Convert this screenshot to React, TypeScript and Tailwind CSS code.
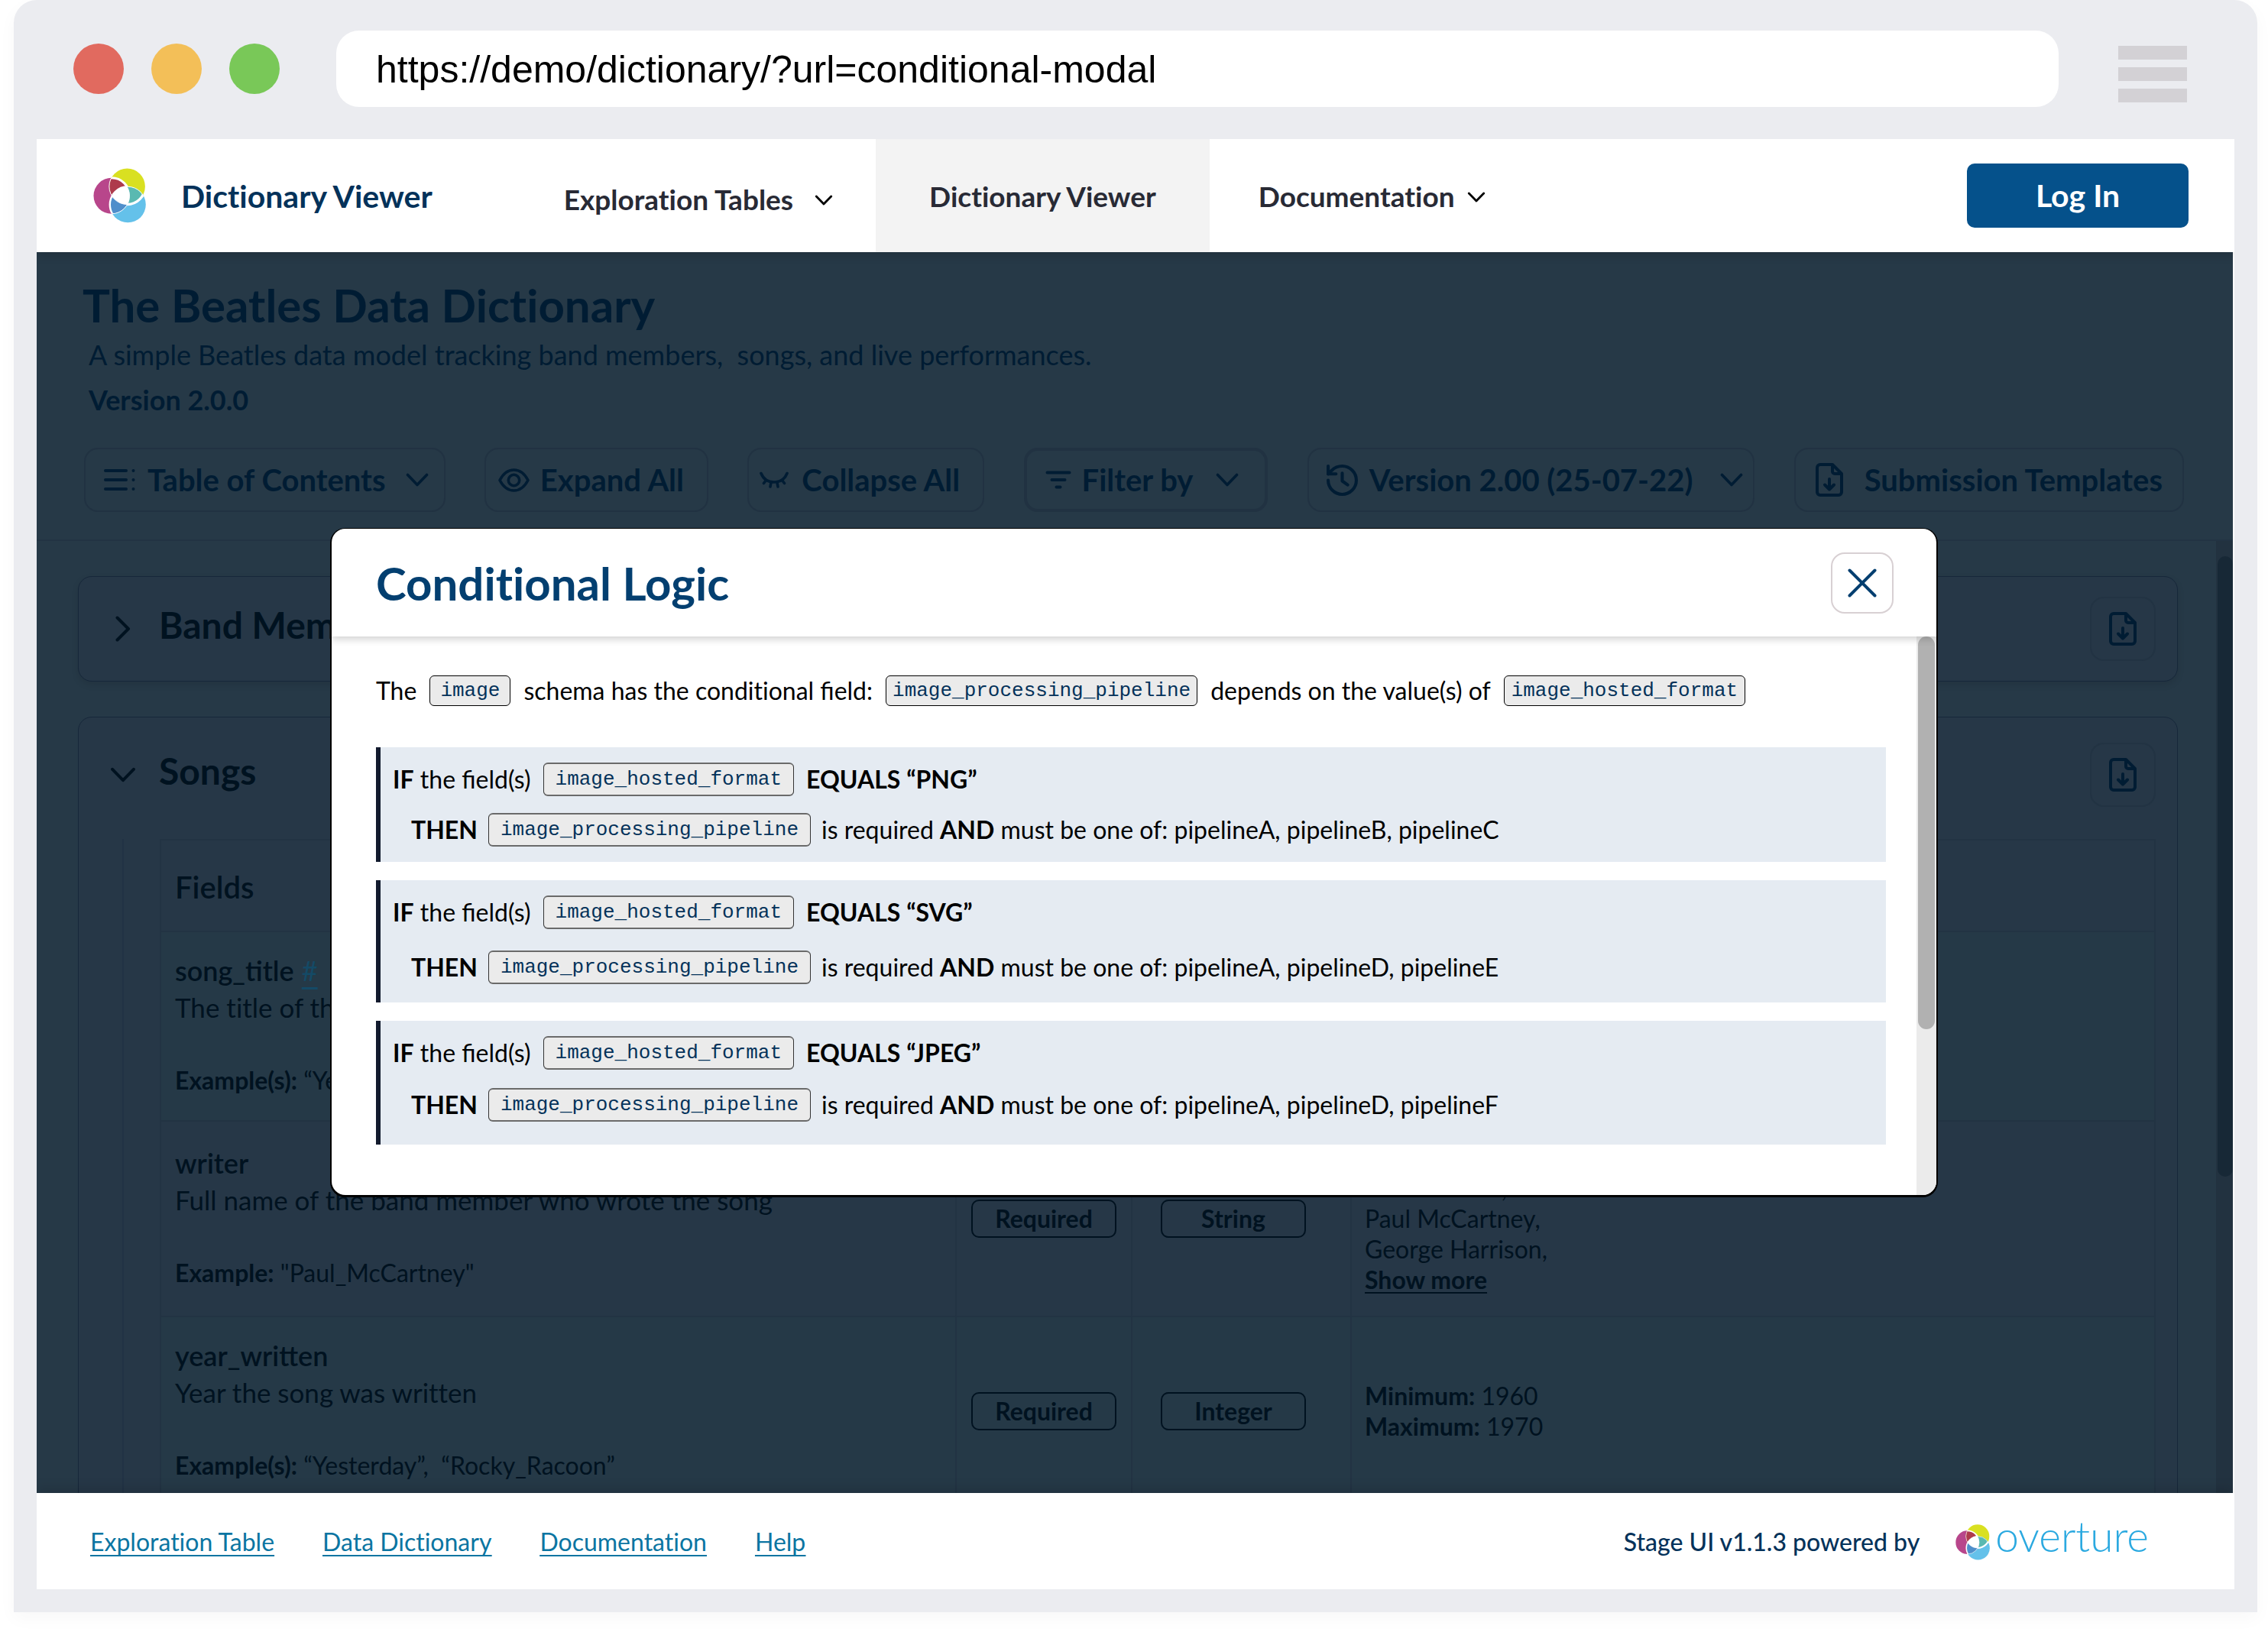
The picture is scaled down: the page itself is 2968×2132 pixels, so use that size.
import { useId, type ReactNode } from "react";

function OvertureMark({ className }: { className: string }) {
  const id = useId().replace(/[^a-zA-Z0-9]/g, "");
  const y = `y${id}`;
  const m = `m${id}`;
  const b = `b${id}`;
  const yellow = { cx: 56.4, cy: 38, r: 23.5 };
  const magenta = { cx: 36, cy: 50.3, r: 23.5 };
  const blue = { cx: 57.3, cy: 61.8, r: 23.5 };
  return (
    <svg viewBox="12 14 69 72" className={className} aria-hidden="true">
      <defs>
        <clipPath id={y}><circle {...yellow} /></clipPath>
        <clipPath id={m}><circle {...magenta} /></clipPath>
        <clipPath id={b}><circle {...blue} /></clipPath>
      </defs>
      <circle {...magenta} fill="#b8468b" />
      <circle {...yellow} fill="#d9e021" />
      <circle {...blue} fill="#64c1ea" />
      <g clipPath={`url(#${y})`}>
        <circle {...magenta} fill="#ae3b4c" stroke="#fff" strokeWidth="3" />
        <circle {...blue} fill="#5ab9b1" />
      </g>
      <g clipPath={`url(#${b})`}>
        <circle {...yellow} fill="none" stroke="#fff" strokeWidth="3.4" />
        <g clipPath={`url(#${m})`}>
          <rect x="0" y="0" width="100" height="100" fill="#4f8fcb" />
        </g>
        <circle {...magenta} fill="none" stroke="#fff" strokeWidth="1" />
      </g>
      <g clipPath={`url(#${m})`}>
        <circle {...yellow} fill="none" stroke="#fff" strokeWidth="1" />
        <circle {...blue} fill="none" stroke="#fff" strokeWidth="2.4" />
        <g clipPath={`url(#${y})`}>
          <circle {...blue} fill="#fff" />
        </g>
      </g>
      <g clipPath={`url(#${y})`}>
        <circle {...blue} fill="none" stroke="#fff" strokeWidth="1" />
      </g>
    </svg>
  );
}

function ChevronDown({ className }: { className: string }) {
  return (
    <svg viewBox="0 0 30 18" className={className} fill="none" stroke="currentColor" strokeWidth="3.6" strokeLinecap="round" strokeLinejoin="round" aria-hidden="true">
      <path d="M2.5 2.5 15 15.5 27.5 2.5" />
    </svg>
  );
}

function FileDownIcon() {
  return (
    <svg viewBox="0 0 36 44" className="h-11 w-9 shrink-0" fill="none" stroke="currentColor" strokeWidth="4" strokeLinecap="round" strokeLinejoin="round" aria-hidden="true">
      <path d="M6 2h16l12 12v24a4 4 0 0 1-4 4H6a4 4 0 0 1-4-4V6a4 4 0 0 1 4-4z" />
      <path d="M22 3v8a3 3 0 0 0 3 3h8" />
      <path d="M18 21v13M12 28.500l6 6 6-6" />
    </svg>
  );
}

function ListIcon() {
  return (
    <svg viewBox="0 0 41 30" className="h-[30px] w-[41px]" fill="none" stroke="currentColor" strokeWidth="4" strokeLinecap="round" aria-hidden="true">
      <path d="M2 3h27M2 15h27M2 27h27" />
      <path d="M38.500 3h.01M38.500 15h.01M38.500 27h.01" />
    </svg>
  );
}

function EyeIcon() {
  return (
    <svg viewBox="0 0 41 31" className="h-[31px] w-[41px]" fill="none" stroke="currentColor" strokeWidth="3.600" strokeLinejoin="round" aria-hidden="true">
      <path d="M2 15.500C7 6 13 2 20.500 2S34 6 39 15.500C34 25 28 29 20.500 29S7 25 2 15.500z" />
      <circle cx="20.500" cy="15.500" r="7.200" />
    </svg>
  );
}

function EyeClosedIcon() {
  return (
    <svg viewBox="0 0 38 22" className="h-[22px] w-[38px]" fill="none" stroke="currentColor" strokeWidth="3.600" strokeLinecap="round" aria-hidden="true">
      <path d="M2 2.500C5 10 11 14 19 14s14-4 17-11.500" />
      <path d="M15 14.500 14 20M23 14.500 24 20M8.500 11.500 5.500 15.500M29.500 11.500l3 4" />
    </svg>
  );
}

function FilterIcon() {
  return (
    <svg viewBox="0 0 34 24" className="h-6 w-[34px]" fill="none" stroke="currentColor" strokeWidth="4" strokeLinecap="round" aria-hidden="true">
      <path d="M2.500 2.500h29M8.500 12h17M14.500 21.500h5" />
    </svg>
  );
}

function HistoryIcon() {
  return (
    <svg viewBox="2 2 20 20" className="size-[41px]" fill="none" stroke="currentColor" strokeWidth="2" strokeLinecap="round" strokeLinejoin="round" aria-hidden="true">
      <path d="M3 12a9 9 0 1 0 9-9 9.750 9.750 0 0 0-6.740 2.740L3 8" />
      <path d="M3 3v5h5" />
      <path d="M12 7.500v5l3.500 2.500" />
    </svg>
  );
}

function ToolbarButton({ className, children }: { className: string; children: ReactNode }) {
  return (
    <button type="button" className={`flex h-[84px] items-center whitespace-nowrap rounded-[18px] border-[#213242] text-[40px] font-bold leading-none text-[#001c33] ${className}`}>
      {children}
    </button>
  );
}

function DownloadButton({ label }: { label: string }) {
  return (
    <button type="button" aria-label={label} className="flex h-[84px] w-[86px] items-center justify-center rounded-[18px] border-2 border-[#223343] text-[#001c33]">
      <FileDownIcon />
    </button>
  );
}

function Badge({ children }: { children: ReactNode }) {
  return (
    <span className="inline-flex h-[50px] w-[190px] items-center justify-center rounded-[10px] border-2 border-[#001220] text-[32px] font-bold leading-none">
      {children}
    </span>
  );
}

function IntroChip({ className, children }: { className: string; children: ReactNode }) {
  return (
    <code className={`flex h-10 items-center rounded-[6px] border border-black bg-[#ebebeb] font-['Liberation_Mono',monospace] text-[26px] leading-none text-[#04325a] ${className}`}>
      {children}
    </code>
  );
}

function RuleChip({ children }: { children: ReactNode }) {
  return (
    <code className="flex h-11 items-center rounded-[6px] border-x border-y-2 border-x-[#333] border-y-[#6a6a6a] bg-[#ebebeb] px-[15px] font-['Liberation_Mono',monospace] text-[26px] leading-none text-[#04325a]">
      {children}
    </code>
  );
}

function Rule({ value, options, className }: { value: string; options: string; className: string }) {
  return (
    <section className={`flex flex-col border-l-[6px] border-[#131b2e] bg-[#e5ebf2] pl-4 pt-5 ${className}`}>
      <p className="flex h-11 items-center gap-4">
        <span>
          <b>IF</b> the <span className="[font-variant-ligatures:normal]">field(s)</span>
        </span>
        <RuleChip>image_hosted_format</RuleChip>
        <b>EQUALS “{value}”</b>
      </p>
      <p className="flex h-11 items-center gap-3.5 pl-6">
        <b>THEN</b>
        <RuleChip>image_processing_pipeline</RuleChip>
        <span>
          is required <b>AND</b> must be one of: {options}
        </span>
      </p>
    </section>
  );
}

function ConditionalModal() {
  return (
    <div className="absolute inset-0 flex items-start pl-[386px] pr-[388px] pt-[362px]">
      <div role="dialog" aria-labelledby="modal-title" className="flex-1 overflow-hidden rounded-[18px] bg-white text-black shadow-[0_1px_0_2px_#000]">
        <div className="relative flex items-center justify-between pb-[30px] pl-[58px] pr-14 pt-[31px] shadow-[0_3px_10px_rgba(0,0,0,0.2)]">
          <h2 id="modal-title" className="text-[60px] font-bold leading-none text-[#033f70]">Conditional Logic</h2>
          <button type="button" aria-label="Close" className="flex h-20 w-[82px] items-center justify-center rounded-[18px] border-2 border-[#d8d0d3] text-[#033f70]">
            <svg viewBox="0 0 38 38" className="size-[38px]" stroke="currentColor" strokeWidth="4" strokeLinecap="round" aria-hidden="true">
              <path d="M2.500 2.500l33 33M35.500 2.500l-33 33" />
            </svg>
          </button>
        </div>
        <div className="flex">
          <div className="flex-1 pb-[66px] pl-[58px] pr-10 pt-[51px] text-[32px] leading-10">
            <p className="mb-[54px] flex items-center gap-[17px]">
              <span>The</span>
              <IntroChip className="px-[13px]">image</IntroChip>
              <span>
                schema has the conditional <span className="[font-variant-ligatures:normal]">field</span>:
              </span>
              <IntroChip className="px-2">image_processing_pipeline</IntroChip>
              <span>depends on the value(s) of</span>
              <IntroChip className="px-[9px]">image_hosted_format</IntroChip>
            </p>
            <div className="flex flex-col gap-6">
              <Rule value="PNG" options="pipelineA, pipelineB, pipelineC" className="gap-[22px] pb-5" />
              <Rule value="SVG" options="pipelineA, pipelineD, pipelineE" className="gap-7 pb-6" />
              <Rule value="JPEG" options="pipelineA, pipelineD, pipelineF" className="gap-6 pb-[30px]" />
            </div>
          </div>
          <div className="w-[26px] bg-[#ebebeb] px-0.5">
            <div className="h-[514px] rounded-full bg-[#b1b1b1]" />
          </div>
        </div>
      </div>
    </div>
  );
}

function FieldCell({ name, anchor, description, exampleLabel, example, className }: { name: string; anchor?: boolean; description: string; exampleLabel: string; example: string; className: string }) {
  return (
    <td className={`border-2 border-[#223343] pl-[18px] text-left align-top leading-[48px] ${className}`}>
      <div className="text-[36px]">
        <span className="font-semibold [font-variant-ligatures:normal]">{name}</span>
        {anchor && <a href="#song_title" className="ml-2.5 text-[#144a66] underline underline-offset-8">#</a>}
      </div>
      <div className="text-[35px]">{description}</div>
      <div className="mt-12 text-[32px]">
        <b>{exampleLabel}</b> {example}
      </div>
    </td>
  );
}

function DictionaryTable() {
  return (
    <table className="w-full table-fixed border-collapse text-[#001220]">
      <colgroup>
        <col className="w-[1041px]" />
        <col className="w-[230px]" />
        <col className="w-[287px]" />
        <col />
      </colgroup>
      <thead>
        <tr className="h-[120px]">
          <th scope="col" colSpan={4} className="border-2 border-[#223343] pl-[18px] pt-1 text-left text-[40px] font-semibold leading-none">Fields</th>
        </tr>
      </thead>
      <tbody className="bg-[#253947]">
        <tr>
          <FieldCell name="song_title" anchor description="The title of the song" exampleLabel="Example(s):" example="“Yesterday”" className="pb-7 pt-[26px]" />
          <td className="border-2 border-[#223343]" />
          <td className="border-2 border-[#223343]" />
          <td className="border-2 border-[#223343]" />
        </tr>
        <tr className="bg-[#263747]">
          <FieldCell name="writer" description="Full name of the band member who wrote the song" exampleLabel="Example:" example={'"Paul_McCartney"'} className="pb-8 pt-[30px]" />
          <td className="border-2 border-[#223343] text-center"><Badge>Required</Badge></td>
          <td className="border-2 border-[#223343] pl-[37px]"><Badge>String</Badge></td>
          <td className="border-2 border-[#223343] pl-[17px] text-[32px] leading-10">
            <b>One of:</b>
            <br />
            John Lennon,
            <br />
            Paul McCartney,
            <br />
            George Harrison,
            <br />
            <a href="#writer" className="font-bold underline decoration-2 underline-offset-4">Show more</a>
          </td>
        </tr>
        <tr>
          <FieldCell name="year_written" description="Year the song was written" exampleLabel="Example(s):" example="“Yesterday”,  “Rocky_Racoon”" className="whitespace-pre-wrap pb-7 pt-[26px]" />
          <td className="border-2 border-[#223343] text-center"><Badge>Required</Badge></td>
          <td className="border-2 border-[#223343] pl-[37px]"><Badge>Integer</Badge></td>
          <td className="border-2 border-[#223343] pl-[17px] text-[32px] leading-10">
            <b>Minimum:</b> 1960
            <br />
            <b>Maximum:</b> 1970
          </td>
        </tr>
      </tbody>
    </table>
  );
}

function CardHeader({ open, title, className }: { open: boolean; title: string; className: string }) {
  return (
    <div className={`flex items-center pl-[41px] pr-7 ${className}`}>
      <button type="button" aria-expanded={open} className="flex items-center gap-[30px] text-[#001220]">
        <span className="flex w-[34px] justify-center">
          {open ? (
            <ChevronDown className="h-5 w-[34px]" />
          ) : (
            <svg viewBox="0 0 20 34" className="h-[34px] w-5" fill="none" stroke="currentColor" strokeWidth="4" strokeLinecap="round" strokeLinejoin="round" aria-hidden="true">
              <path d="M2.500 2.500 17 17 2.500 31.500" />
            </svg>
          )}
        </span>
        <span className="pb-2.5 text-[48px] font-bold leading-none">{title}</span>
      </button>
      <div className="ml-auto">
        <DownloadButton label={`Download ${title} template`} />
      </div>
    </div>
  );
}

export default function App() {
  return (
    <div className="flex h-screen flex-col overflow-hidden bg-white px-[18px] pb-[22px] font-['Lato',sans-serif] [font-variant-ligatures:none]">
      <div className="mr-[-4px] flex min-h-0 flex-1 flex-col rounded-t-[30px] bg-[#ebecf0] px-[30px] pb-[30px] shadow-[0_8px_24px_rgba(0,0,0,0.03)]">
        <div className="flex items-center pb-[42px] pl-12 pr-[62px] pt-10">
          <div className="flex gap-9">
            <span className="size-[66px] rounded-full bg-[#e16a5f]" />
            <span className="size-[66px] rounded-full bg-[#f3bf58]" />
            <span className="size-[66px] rounded-full bg-[#79c858]" />
          </div>
          <input
            aria-label="Address"
            readOnly
            value="https://demo/dictionary/?url=conditional-modal"
            className="ml-[74px] h-[100px] flex-1 rounded-[30px] bg-white pl-[52px] pt-0.5 font-['Liberation_Sans',sans-serif] text-[50px] text-black"
          />
          <button type="button" aria-label="Browser menu" className="ml-[78px] mt-3.5 flex flex-col gap-2.5">
            <span className="h-[18px] w-[90px] bg-[#d3d1d5]" />
            <span className="h-[18px] w-[90px] bg-[#d3d1d5]" />
            <span className="h-[18px] w-[90px] bg-[#d3d1d5]" />
          </button>
        </div>

        <div className="flex min-h-0 flex-1 flex-col overflow-hidden bg-white">
          <header className="relative z-10 flex items-stretch bg-white pl-[74px] pr-[60px] shadow-[0_4px_12px_rgba(0,0,0,0.15)]">
            <a href="#home" className="flex items-center gap-[46px] text-[41px] font-bold leading-none text-[#04325a]">
              <OvertureMark className="h-[72px] w-[69px]" />
              Dictionary Viewer
            </a>
            <nav className="ml-[172px] flex items-stretch text-[37px] font-bold leading-none text-[#282a35]">
              <button type="button" className="flex items-center gap-7 pr-14 pt-2">
                Exploration Tables
                <ChevronDown className="mt-1 h-3.5 w-6 text-black" />
              </button>
              <a href="#dictionary" aria-current="page" className="flex items-center bg-[#f3f3f3] px-[70px]">Dictionary Viewer</a>
              <button type="button" className="ml-16 flex items-center gap-4">
                Documentation
                <ChevronDown className="mt-1 h-3.5 w-6 text-black" />
              </button>
            </nav>
            <button type="button" className="my-8 ml-auto h-[84px] w-[290px] rounded-[10px] bg-[#05518b] pb-0.5 text-[41px] font-bold leading-none text-white">
              Log In
            </button>
          </header>

          <main className="relative mr-0.5 flex min-h-0 flex-1 flex-col overflow-hidden bg-[#263947] text-[#001c33]">
            <section className="border-b-2 border-[#223343] pb-9">
              <div className="pl-[60px] pt-[34px]">
                <h1 className="text-[60px] font-bold leading-[70px]">The Beatles Data Dictionary</h1>
                <p className="whitespace-pre-wrap pl-2 text-[36px] leading-[60px]">A simple Beatles data model tracking band members,  songs, and live performances.</p>
                <p className="pl-2 text-[36px] font-bold leading-[58px]">Version 2.0.0</p>
              </div>
              <div className="mt-[34px] flex justify-between pl-[62px] pr-16">
                <ToolbarButton className="border-2 pl-6 pr-5">
                  <ListIcon />
                  <span className="ml-4 mr-[26px]">Table of Contents</span>
                  <ChevronDown className="h-[18px] w-[30px]" />
                </ToolbarButton>
                <ToolbarButton className="gap-[14px] border-2 pl-4 pr-[30px]">
                  <EyeIcon />
                  Expand All
                </ToolbarButton>
                <ToolbarButton className="gap-[17px] border-2 pl-[14px] pr-[30px]">
                  <EyeClosedIcon />
                  Collapse All
                </ToolbarButton>
                <ToolbarButton className="border-4 pl-6 pr-[34px]">
                  <FilterIcon />
                  <span className="ml-[14px] mr-[30px]">Filter by</span>
                  <ChevronDown className="h-[18px] w-[30px]" />
                </ToolbarButton>
                <ToolbarButton className="border-2 pl-[23px] pr-[13px]">
                  <HistoryIcon />
                  <span className="ml-[15px] mr-9">Version 2.00 (25-07-22)</span>
                  <ChevronDown className="h-[18px] w-[30px]" />
                </ToolbarButton>
                <ToolbarButton className="gap-7 border-2 px-[26px]">
                  <FileDownIcon />
                  Submission Templates
                </ToolbarButton>
              </div>
            </section>

            <div className="flex min-h-0 flex-1">
              <div className="min-w-0 flex-1 overflow-hidden pl-[54px] pr-[50px] pt-[46px]">
                <article className="rounded-[18px] border border-[#16273a] bg-[#263747] shadow-[0_4px_10px_rgba(0,0,0,0.1)]">
                  <CardHeader open={false} title="Band Members" className="py-[26px]" />
                </article>
                <article className="mt-[46px] rounded-t-[18px] border border-[#16273a] bg-[#263747]">
                  <CardHeader open title="Songs" className="pb-[42px] pt-[33px]" />
                  <div className="ml-[57px] mr-7 border-l-2 border-[#213245] pl-[47px]">
                    <DictionaryTable />
                  </div>
                </article>
              </div>
              <div className="w-[22px] bg-[#223240] pl-0.5 pt-5">
                <div className="h-[812px] rounded-full bg-[#172836]" />
              </div>
            </div>

            <ConditionalModal />
          </main>

          <footer className="relative z-10 flex h-[126px] items-center bg-white pl-[70px] pr-[112px] pt-0.5 text-[32px] leading-none shadow-[0_-4px_16px_rgba(0,0,0,0.15)]">
            <nav className="flex gap-[63px] text-[#0b75a2] underline decoration-2 underline-offset-[5px]">
              <a href="#exploration">Exploration Table</a>
              <a href="#dictionary">Data Dictionary</a>
              <a href="#documentation">Documentation</a>
              <a href="#help">Help</a>
            </nav>
            <p className="ml-auto font-medium text-[#04325a]">Stage UI v1.1.3 powered by</p>
            <a href="#overture" className="ml-[47px] flex items-center gap-[7px]">
              <OvertureMark className="h-[47px] w-[45px]" />
              <span className="pb-4 text-[55px] font-light leading-none text-[#2ba9e0]">overture</span>
            </a>
          </footer>
        </div>
      </div>
    </div>
  );
}
